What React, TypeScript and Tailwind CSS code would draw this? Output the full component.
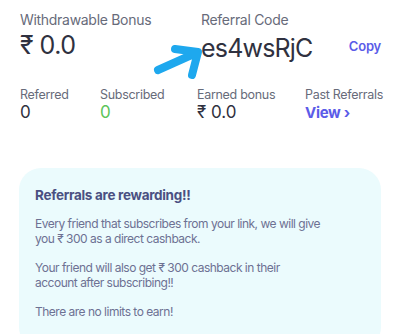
import React from "react";

export default function App() {
  return (
    <div className="w-[400px] h-[334px] bg-white overflow-hidden relative" style={{ fontFamily: "Inter, 'Noto Sans', sans-serif" }}>
      <div className="flex pt-[10px]">
        <div className="w-[201px] pl-[20px]">
          <div className="text-[14px] text-[#676b7a] tracking-[-0.3px] leading-[20px]">Withdrawable Bonus</div>
          <div className="text-[25px] text-[#2f3140] leading-[30px] tracking-[-0.5px]">₹ 0.0</div>
        </div>
        <div className="flex-1">
          <div className="text-[14px] text-[#676b7a] tracking-[-0.3px] leading-[20px]">Referral Code</div>
          <div className="flex items-center">
            <div className="text-[25px] text-[#2f3140] leading-[30px] mt-[3px] tracking-[-0.8px]">es4wsRjC</div>
            <div className="ml-auto mr-[19px] text-[13px] font-semibold text-[#5b5ce8] tracking-[-0.2px]">Copy</div>
          </div>
        </div>
      </div>
      <svg className="absolute left-[145px] top-[42px]" width="60" height="42" viewBox="0 0 60 42">
        <path d="M13 28 L51 11 M30 7 L53 10 L47 33" fill="none" stroke="#1ea8ee" strokeWidth="8" strokeLinecap="round" strokeLinejoin="round" />
      </svg>
      <div className="flex mt-[24px] pl-[20px]">
        <div className="w-[80px]">
          <div className="text-[12.5px] text-[#676b7a] tracking-[-0.3px] leading-[16px]">Referred</div>
          <div className="text-[17px] text-[#2f3140] leading-[19px]">0</div>
        </div>
        <div className="w-[97px]">
          <div className="text-[12.5px] text-[#676b7a] tracking-[-0.3px] leading-[16px]">Subscribed</div>
          <div className="text-[17px] text-[#5cc45a] leading-[19px]">0</div>
        </div>
        <div className="w-[108px]">
          <div className="text-[12.5px] text-[#676b7a] tracking-[-0.3px] leading-[16px]">Earned bonus</div>
          <div className="text-[17px] text-[#2f3140] leading-[19px]">₹ 0.0</div>
        </div>
        <div>
          <div className="text-[12.5px] text-[#676b7a] tracking-[-0.3px] leading-[16px]">Past Referrals</div>
          <div className="text-[15px] font-bold text-[#5b5ce8] leading-[19px] tracking-[-0.3px]">View ›</div>
        </div>
      </div>
      <div className="mx-[19px] mt-[46px] bg-[#ebfbfd] rounded-[22px] px-[16px] pt-[17px] pb-[30px]">
        <div className="text-[13.5px] font-bold text-[#4a5082] leading-[20px] tracking-[-0.3px]">Referrals are rewarding!!</div>
        <div className="mt-[11px] text-[12px] text-[#6d7193] leading-[15px] tracking-[-0.5px]">
          Every friend that subscribes from your link, we will give<br />you ₹ 300 as a direct cashback.
        </div>
        <div className="mt-[14px] text-[12px] text-[#6d7193] leading-[15px] tracking-[-0.5px]">
          Your friend will also get ₹ 300 cashback in their<br />account after subscribing!!
        </div>
        <div className="mt-[14px] text-[12px] text-[#6d7193] leading-[15px] tracking-[-0.5px]">
          There are no limits to earn!
        </div>
      </div>
    </div>
  );
}
